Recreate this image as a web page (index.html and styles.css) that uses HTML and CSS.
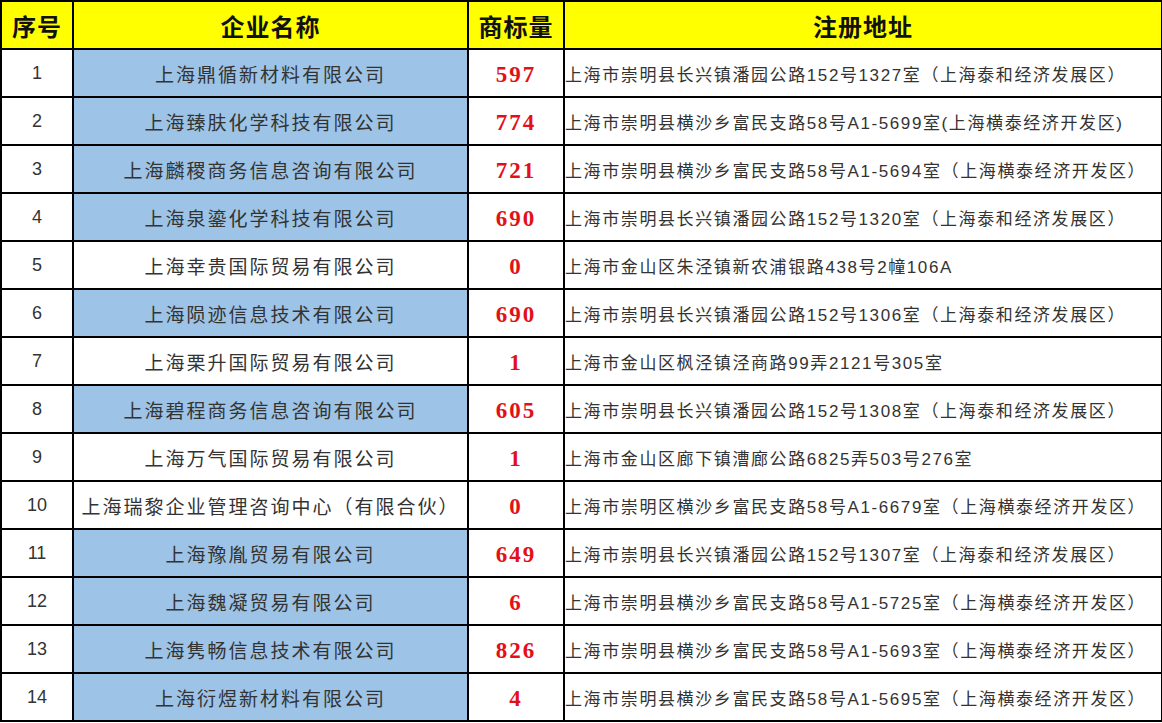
FILE: index.html
```html
<!DOCTYPE html>
<html lang="zh">
<head>
<meta charset="utf-8">
<title>企业商标列表</title>
<link rel="stylesheet" href="styles.css">
</head>
<body>
<table class="sheet">
  <colgroup>
    <col class="c-no">
    <col class="c-name">
    <col class="c-count">
    <col class="c-addr">
  </colgroup>
  <thead>
    <tr class="head">
      <th>序号</th>
      <th>企业名称</th>
      <th>商标量</th>
      <th>注册地址</th>
    </tr>
  </thead>
  <tbody>
    <tr><td class="no">1</td><td class="name blue">上海鼎循新材料有限公司</td><td class="count">597</td><td class="addr">上海市崇明县长兴镇潘园公路152号1327室（上海泰和经济发展区）</td></tr>
    <tr><td class="no">2</td><td class="name blue">上海臻肤化学科技有限公司</td><td class="count">774</td><td class="addr">上海市崇明县横沙乡富民支路58号A1-5699室(上海横泰经济开发区)</td></tr>
    <tr><td class="no">3</td><td class="name blue">上海麟稷商务信息咨询有限公司</td><td class="count">721</td><td class="addr">上海市崇明县横沙乡富民支路58号A1-5694室（上海横泰经济开发区）</td></tr>
    <tr><td class="no">4</td><td class="name blue">上海泉鎏化学科技有限公司</td><td class="count">690</td><td class="addr">上海市崇明县长兴镇潘园公路152号1320室（上海泰和经济发展区）</td></tr>
    <tr><td class="no">5</td><td class="name">上海幸贵国际贸易有限公司</td><td class="count">0</td><td class="addr">上海市金山区朱泾镇新农浦银路438号2幢106A</td></tr>
    <tr><td class="no">6</td><td class="name blue">上海陨迹信息技术有限公司</td><td class="count">690</td><td class="addr">上海市崇明县长兴镇潘园公路152号1306室（上海泰和经济发展区）</td></tr>
    <tr><td class="no">7</td><td class="name">上海栗升国际贸易有限公司</td><td class="count">1</td><td class="addr">上海市金山区枫泾镇泾商路99弄2121号305室</td></tr>
    <tr><td class="no">8</td><td class="name blue">上海碧程商务信息咨询有限公司</td><td class="count">605</td><td class="addr">上海市崇明县长兴镇潘园公路152号1308室（上海泰和经济发展区）</td></tr>
    <tr><td class="no">9</td><td class="name">上海万气国际贸易有限公司</td><td class="count">1</td><td class="addr">上海市金山区廊下镇漕廊公路6825弄503号276室</td></tr>
    <tr><td class="no">10</td><td class="name">上海瑞黎企业管理咨询中心（有限合伙）</td><td class="count">0</td><td class="addr">上海市崇明区横沙乡富民支路58号A1-6679室（上海横泰经济开发区）</td></tr>
    <tr><td class="no">11</td><td class="name blue">上海豫胤贸易有限公司</td><td class="count">649</td><td class="addr">上海市崇明县长兴镇潘园公路152号1307室（上海泰和经济发展区）</td></tr>
    <tr><td class="no">12</td><td class="name blue">上海魏凝贸易有限公司</td><td class="count">6</td><td class="addr">上海市崇明县横沙乡富民支路58号A1-5725室（上海横泰经济开发区）</td></tr>
    <tr><td class="no">13</td><td class="name blue">上海隽畅信息技术有限公司</td><td class="count">826</td><td class="addr">上海市崇明县横沙乡富民支路58号A1-5693室（上海横泰经济开发区）</td></tr>
    <tr><td class="no">14</td><td class="name blue">上海衍煜新材料有限公司</td><td class="count">4</td><td class="addr">上海市崇明县横沙乡富民支路58号A1-5695室（上海横泰经济开发区）</td></tr>
  </tbody>
</table>
</body>
</html>
```

FILE: styles.css
```css
html, body {
  margin: 0;
  padding: 0;
  background: #ffffff;
}

.sheet {
  border-collapse: collapse;
  table-layout: fixed;
  width: 1161px;
  font-family: "Liberation Sans", "Noto Sans CJK SC", sans-serif;
  color: #333333;
}

.c-no { width: 72px; }
.c-name { width: 395px; }
.c-count { width: 96px; }
.c-addr { width: 598px; }

.sheet tr {
  height: 48px;
}

.sheet th,
.sheet td {
  border: 2px solid #000000;
  padding: 0;
  white-space: nowrap;
  overflow: hidden;
}

.head th {
  background: #ffff00;
  color: #111111;
  font-family: "Noto Sans CJK SC", sans-serif;
  font-weight: 700;
  font-size: 24px;
  letter-spacing: 1px;
  text-align: center;
  vertical-align: middle;
}

.no {
  text-align: center;
  font-size: 18px;
}

.name {
  text-align: center;
  font-size: 19px;
  letter-spacing: 2px;
}

.blue {
  background: #9dc3e6;
}

.sheet td.count {
  text-align: center;
  vertical-align: bottom;
  padding-bottom: 8px;
  line-height: 26px;
  font-family: "Liberation Serif", serif;
  font-weight: 700;
  font-size: 23px;
  letter-spacing: 2px;
  color: #e3101a;
}

.addr {
  text-align: left;
  padding-left: 3px;
  font-size: 17px;
  letter-spacing: 1.6px;
}
```
